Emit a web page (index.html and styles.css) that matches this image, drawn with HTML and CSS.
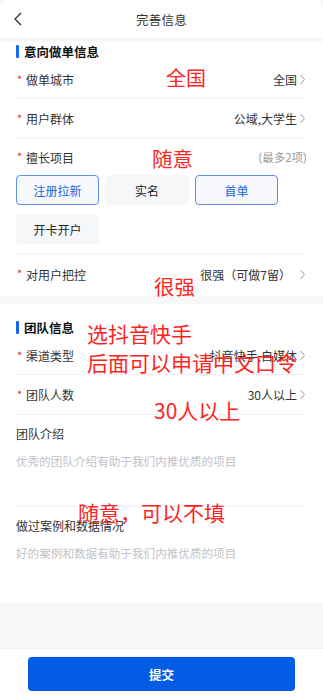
FILE: index.html
```html
<!DOCTYPE html>
<html lang="zh">
<head>
<meta charset="utf-8">
<link rel="stylesheet" href="styles.css">
</head>
<body>
<div class="page">
  <header class="topbar">
    <svg class="back" width="10" height="14" viewBox="0 0 10 14"><polyline points="8,1 2,7 8,13" fill="none" stroke="#333" stroke-width="1.4"/></svg>
    <div class="title">完善信息</div>
  </header>

  <section class="section first">
    <div class="sec-title"><span class="bar"></span>意向做单信息</div>
    <div class="row first-row">
      <div class="label"><span class="req">*</span>做单城市</div>
      <div class="value">全国<svg class="chev" width="7" height="11" viewBox="0 0 7 11"><polyline points="1.5,1 5.5,5.5 1.5,10" fill="none" stroke="#999" stroke-width="1"/></svg></div>
    </div>
    <div class="row">
      <div class="label"><span class="req">*</span>用户群体</div>
      <div class="value">公域,大学生<svg class="chev" width="7" height="11" viewBox="0 0 7 11"><polyline points="1.5,1 5.5,5.5 1.5,10" fill="none" stroke="#999" stroke-width="1"/></svg></div>
    </div>
    <div class="tag-block">
      <div class="tag-head">
        <div class="label"><span class="req">*</span>擅长项目</div>
        <div class="hint">(最多2项)</div>
      </div>
      <div class="tags">
        <div class="tag on">注册拉新</div>
        <div class="tag">实名</div>
        <div class="tag on">首单</div>
        <div class="tag">开卡开户</div>
      </div>
    </div>
    <div class="row last">
      <div class="label"><span class="req">*</span>对用户把控</div>
      <div class="value">很强（可做7留）<svg class="chev gap" width="7" height="11" viewBox="0 0 7 11"><polyline points="1.5,1 5.5,5.5 1.5,10" fill="none" stroke="#999" stroke-width="1"/></svg></div>
    </div>
  </section>

  <section class="section second">
    <div class="sec-title"><span class="bar"></span>团队信息</div>
    <div class="row first-row">
      <div class="label"><span class="req">*</span>渠道类型</div>
      <div class="value">抖音快手,自媒体<svg class="chev" width="7" height="11" viewBox="0 0 7 11"><polyline points="1.5,1 5.5,5.5 1.5,10" fill="none" stroke="#999" stroke-width="1"/></svg></div>
    </div>
    <div class="row">
      <div class="label"><span class="req">*</span>团队人数</div>
      <div class="value">30人以上<svg class="chev" width="7" height="11" viewBox="0 0 7 11"><polyline points="1.5,1 5.5,5.5 1.5,10" fill="none" stroke="#999" stroke-width="1"/></svg></div>
    </div>
    <div class="area bordered">
      <div class="area-label">团队介绍</div>
      <div class="placeholder">优秀的团队介绍有助于我们内推优质的项目</div>
    </div>
    <div class="area">
      <div class="area-label">做过案例和数据情况</div>
      <div class="placeholder">好的案例和数据有助于我们内推优质的项目</div>
    </div>
  </section>

  <div class="filler"></div>

  <footer class="footer">
    <button class="submit">提交</button>
  </footer>

  <div class="note n1">全国</div>
  <div class="note n2">随意</div>
  <div class="note n3">很强</div>
  <div class="note n4">选抖音快手</div>
  <div class="note n5">后面可以申请中文口令</div>
  <div class="note n6">30人以上</div>
  <div class="note n7">随意，可以不填</div>
</div>
</body>
</html>
```

FILE: styles.css
```css
* { box-sizing: border-box; }
html, body { margin: 0; padding: 0; }
body {
  font-family: "Noto Sans CJK SC", "Noto Sans", sans-serif;
  color: #333;
  background: #fff;
}
.page {
  position: relative;
  width: 323px;
  height: 699px;
  display: flex;
  flex-direction: column;
  background: #f6f7f9;
  overflow: hidden;
  border-radius: 0 0 8px 8px;
}
.topbar {
  height: 38px;
  flex: none;
  background: #fff;
  display: flex;
  align-items: center;
  justify-content: center;
  position: relative;
  box-shadow: 0 2px 4px rgba(0,0,0,0.07);
  z-index: 1;
  border-radius: 8px 8px 0 0;
}
.back { position: absolute; left: 13px; top: 12px; }
.title { font-size: 12.5px; color: #333; letter-spacing: 0.2px; }

.section { background: #fff; padding: 0 16px; flex: none; }
.section.first { padding-top: 3px; }
.section.second { margin-top: 8px; padding-top: 13px; }
.sec-title {
  height: 20px;
  display: flex;
  align-items: center;
  font-size: 12.5px;
  font-weight: 700;
  color: #111;
}
.bar { width: 3px; height: 13px; background: #1a66ee; margin-right: 5px; border-radius: 1px; }

.row {
  height: 40px;
  display: flex;
  align-items: center;
  justify-content: space-between;
  border-bottom: 1px solid #eef0f3;
}
.row.first-row { height: 38px; }
.row.last { border-bottom: none; height: 42px; padding-bottom: 2px; }
.label { font-size: 12px; color: #333; display: flex; align-items: center; }
.req { color: #e5262a; font-size: 11px; width: 9px; margin-left: 1px; position: relative; top: -1px; }
.value { font-size: 12px; color: #333; display: flex; align-items: center; margin-right: 1px; }
.chev { margin-left: 2px; }
.chev.gap { margin-left: 8px; }

.tag-block { border-bottom: 1px solid #eef0f3; padding-bottom: 9px; }
.tag-head { height: 36px; display: flex; align-items: center; justify-content: space-between; }
.hint { font-size: 11.5px; color: #999; }
.tags {
  display: grid;
  grid-template-columns: repeat(3, 83px);
  column-gap: 6.5px;
  row-gap: 9px;
}
.tag {
  height: 30px;
  border-radius: 4px;
  background: #f6f7f9;
  display: flex;
  align-items: center;
  justify-content: center;
  font-size: 12px;
  color: #222;
  border: 1px solid transparent;
}
.tag.on { border-color: #5d8ff0; color: #1a66e0; background: #f7f8fb; }

.area { height: 96px; padding-top: 9px; }
.area.bordered { height: 92px; border-bottom: 1px solid #eef0f3; }
.area-label { font-size: 12px; color: #333; line-height: 20px; height: 20px; }
.placeholder { font-size: 11.6px; color: #bfc2c8; line-height: 20px; margin-top: 7px; }

.filler { flex: 1; }

.footer {
  flex: none;
  height: 51px;
  background: #fff;
  border-top: 1px solid #eef1f6;
  display: flex;
  align-items: flex-start;
  justify-content: center;
  padding-top: 8px;
  border-radius: 0 0 8px 8px;
}
.submit {
  width: 267px;
  height: 34px;
  border: none;
  border-radius: 4px;
  background: #025de4;
  color: #fff;
  font-family: "Noto Sans CJK SC", "Noto Sans", sans-serif;
  font-size: 12.5px;
  font-weight: 700;
}

.note {
  position: absolute;
  color: #ff2424;
  font-size: 21px;
  line-height: 1;
  white-space: nowrap;
  z-index: 2;
}
.n1 { left: 166px; top: 68px; font-size: 20px; }
.n2 { left: 152px; top: 148px; font-size: 20.5px; }
.n3 { left: 154px; top: 276px; font-size: 20.5px; }
.n4 { left: 87px; top: 323px; }
.n5 { left: 87px; top: 352px; }
.n6 { left: 154px; top: 400px; }
.n7 { left: 78px; top: 502px; }
```
